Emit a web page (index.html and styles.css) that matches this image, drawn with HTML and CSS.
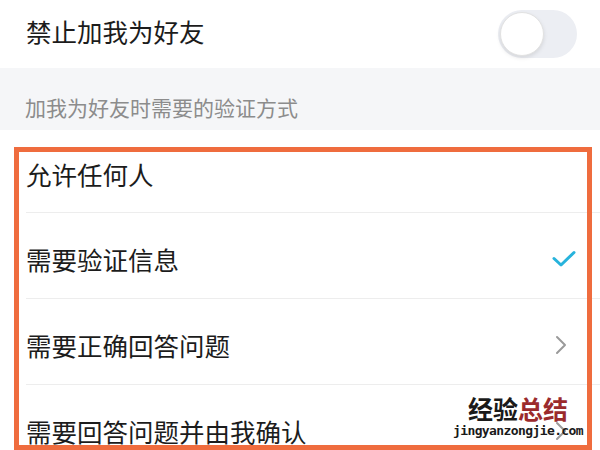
FILE: index.html
```html
<!DOCTYPE html>
<html lang="zh-CN">
<head>
<meta charset="utf-8">
<title>加好友设置</title>
<link rel="stylesheet" href="styles.css">
</head>
<body>
<div class="page">
  <div class="top-row">
    <span class="title">禁止加我为好友</span>
    <span class="toggle"><span class="knob"></span></span>
  </div>
  <div class="section-header">加我为好友时需要的验证方式</div>
  <ul class="options">
    <li class="option first"><span class="label">允许任何人</span></li>
    <li class="option">
      <span class="label">需要验证信息</span>
      <svg class="check" width="24" height="18" viewBox="0 0 24 18"><path d="M2 8.5 L9 15 L22 2.5" fill="none" stroke="#27b3dc" stroke-width="3" stroke-linecap="round" stroke-linejoin="round"/></svg>
    </li>
    <li class="option">
      <span class="label">需要正确回答问题</span>
      <svg class="chev" width="14" height="22" viewBox="0 0 14 22"><path d="M3 3 L11 11 L3 19" fill="none" stroke="#9a9a9a" stroke-width="2" stroke-linecap="round" stroke-linejoin="round"/></svg>
    </li>
    <li class="option">
      <span class="label">需要回答问题并由我确认</span>
      <svg class="chev" width="14" height="22" viewBox="0 0 14 22"><path d="M3 3 L11 11 L3 19" fill="none" stroke="#9a9a9a" stroke-width="2" stroke-linecap="round" stroke-linejoin="round"/></svg>
    </li>
  </ul>
  <div class="highlight"></div>
  <div class="watermark">
    <div class="wm-title"><span class="wm-dark">经验</span><span class="wm-red">总结</span></div>
    <div class="wm-url">jingyanzongjie.com</div>
  </div>
</div>
</body>
</html>
```
FILE: styles.css
```css
* { box-sizing: border-box; }
html, body { margin: 0; padding: 0; background: #fff; }
body { font-family: "Noto Sans CJK SC", "Noto Sans", sans-serif; color: #1c1c1c; }

.page {
  position: relative;
  width: 600px;
  height: 450px;
  overflow: hidden;
  background: #fff;
}

.top-row {
  height: 68px;
  display: flex;
  align-items: center;
  justify-content: space-between;
  padding: 0 23px 6px 26px;
}
.title { font-size: 25.5px; line-height: 1; }

.toggle {
  width: 79px;
  height: 48px;
  border-radius: 24px;
  background: #eceef3;
  display: flex;
  align-items: center;
  padding-left: 2px;
  margin-top: 6px;
}
.knob {
  width: 44px;
  height: 44px;
  border-radius: 50%;
  background: #fff;
  border: 1px solid #e2e2e2;
  box-shadow: 0 2px 4px rgba(0,0,0,0.10);
}

.section-header {
  height: 62px;
  background: #f5f6f8;
  padding: 25px 0 0 25px;
  font-size: 21px;
  line-height: 28px;
  color: #8c8c8c;
}

.options { list-style: none; margin: 0; padding: 0; }
.option {
  height: 86px;
  margin-left: 26px;
  padding: 6px 24px 0 0;
  border-bottom: 1px solid #ededed;
  display: flex;
  align-items: center;
  justify-content: space-between;
}
.option.first { height: 83px; }
.label { font-size: 25.5px; line-height: 1; }
.chev { margin-right: 8px; }

.highlight {
  position: absolute;
  left: 14px;
  top: 147px;
  width: 578px;
  height: 303px;
  border: 5px solid #ef6c3e;
}

.watermark {
  position: absolute;
  left: 444px;
  top: 396px;
  width: 148px;
  text-align: center;
  line-height: 1;
}
.wm-title { font-size: 25px; font-weight: 700; letter-spacing: 0; }
.wm-dark { color: #1a1a1a; }
.wm-red { color: #9b2a2c; }
.wm-url {
  font-family: "DejaVu Sans Mono", monospace;
  font-weight: 700;
  font-size: 13px;
  color: #1a1a1a;
  margin-top: 3px;
  letter-spacing: -0.6px;
}
```
